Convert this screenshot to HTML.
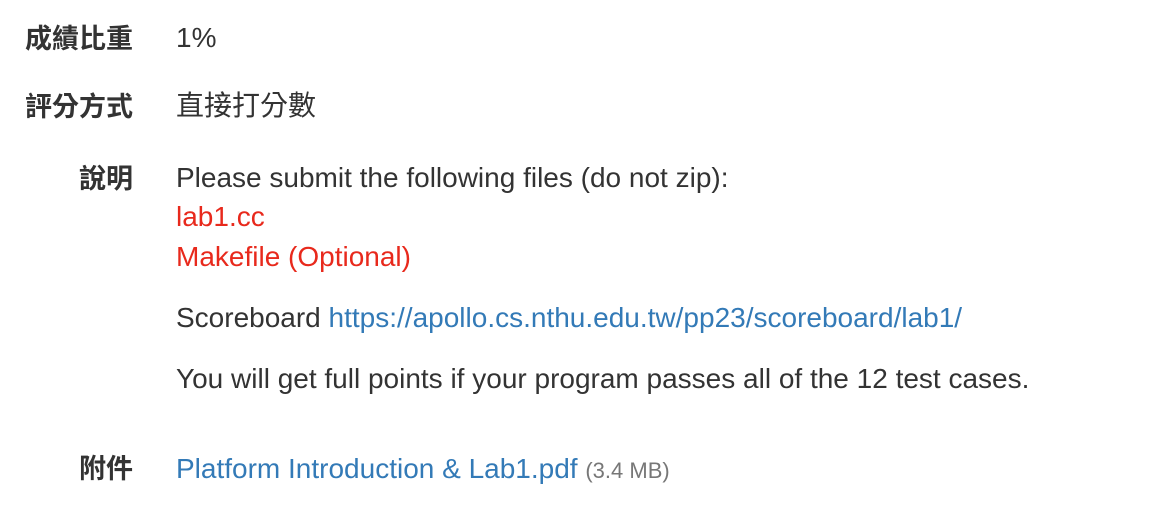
<!DOCTYPE html>
<html><head><meta charset="utf-8"><style>
body{margin:0;width:1150px;height:508px;background:#fff;font-family:"Liberation Sans","Noto Sans CJK TC",sans-serif;color:#333;position:relative;overflow:hidden}
.l{position:absolute;right:1017px;font-weight:bold;font-size:27px;line-height:40px;white-space:nowrap}
.v{position:absolute;left:176px;font-size:28px;line-height:40px;white-space:nowrap}
.r{color:#e8291c}.b{color:#337ab7}.g{color:#777;font-size:22px}
</style></head><body>
<div class="l" style="top:19px">成績比重</div><div class="v" style="top:18px">1%</div>
<div class="l" style="top:87px">評分方式</div><div class="v" style="top:86px">直接打分數</div>
<div class="l" style="top:159px">說明</div><div class="v" style="top:158px">Please submit the following files (do not zip):</div>
<div class="v r" style="top:197px">lab1.cc</div>
<div class="v r" style="top:237px">Makefile (Optional)</div>
<div class="v" style="top:298px">Scoreboard <span class="b">https://apollo.cs.nthu.edu.tw/pp23/scoreboard/lab1/</span></div>
<div class="v" style="top:359px">You will get full points if your program passes all of the 12 test cases.</div>
<div class="l" style="top:449px">附件</div><div class="v" style="top:449px"><span class="b">Platform Introduction &amp; Lab1.pdf</span> <span class="g">(3.4 MB)</span></div>
</body></html>
